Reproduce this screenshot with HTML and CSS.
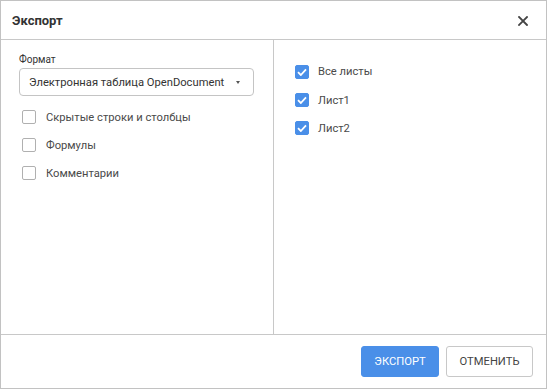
FILE: index.html
```html
<!DOCTYPE html>
<html lang="ru">
<head>
    <meta charset="UTF-8">
    <title>Экспорт</title>
    <link rel="stylesheet" href="styles.css">
</head>
<body>
<div class="dialog">
    <div class="dialog-header">
        <span class="dialog-title">Экспорт</span>
        <svg class="close" width="10" height="10" viewBox="0 0 10 10">
            <path d="M1 1L9 9M9 1L1 9" stroke="#444" stroke-width="1.8" stroke-linecap="square"/>
        </svg>
    </div>
    <div class="dialog-body">
        <div class="panel panel-left">
            <div class="field-label">Формат</div>
            <div class="select">
                <span>Электронная таблица OpenDocument</span>
                <span class="arrow"></span>
            </div>
            <label class="check-row"><span class="box"></span>Скрытые строки и столбцы</label>
            <label class="check-row"><span class="box"></span>Формулы</label>
            <label class="check-row"><span class="box"></span>Комментарии</label>
        </div>
        <div class="panel panel-right">
            <label class="check-row"><span class="box checked"><svg width="10" height="8" viewBox="0 0 10 8"><path d="M1 4.2L3.8 7L9 1.4" fill="none" stroke="#fff" stroke-width="1.8"/></svg></span>Все листы</label>
            <label class="check-row"><span class="box checked"><svg width="10" height="8" viewBox="0 0 10 8"><path d="M1 4.2L3.8 7L9 1.4" fill="none" stroke="#fff" stroke-width="1.8"/></svg></span>Лист1</label>
            <label class="check-row"><span class="box checked"><svg width="10" height="8" viewBox="0 0 10 8"><path d="M1 4.2L3.8 7L9 1.4" fill="none" stroke="#fff" stroke-width="1.8"/></svg></span>Лист2</label>
        </div>
    </div>
    <div class="dialog-footer">
        <button class="btn btn-primary">Экспорт</button>
        <button class="btn">Отменить</button>
    </div>
</div>
</body>
</html>
```

FILE: styles.css
```css
* {
    margin: 0;
    padding: 0;
    box-sizing: border-box;
    font-family: Roboto, 'Liberation Sans', sans-serif;
}

body {
    background: #fff;
}

.dialog {
    width: 547px;
    height: 389px;
    border: 1px solid #c2c2c2;
    display: flex;
    flex-direction: column;
    color: #444;
}

.dialog-header {
    height: 39px;
    border-bottom: 1px solid #c8c8c8;
    display: flex;
    align-items: center;
    justify-content: space-between;
    padding: 0 18px 0 11px;
}

.dialog-title {
    font-size: 13px;
    font-weight: bold;
    color: #333;
}

.close {
    margin-top: 1px;
}

.dialog-body {
    height: 295px;
    border-bottom: 1px solid #c8c8c8;
    display: flex;
}

.panel {
    display: flex;
    flex-direction: column;
}

.panel-left {
    width: 273px;
    border-right: 1px solid #c8c8c8;
    padding: 14px 19px 0 18px;
}

.panel-right {
    flex: 1;
    padding: 17px 20px 0 18px;
}

.field-label {
    font-size: 10px;
    line-height: 12px;
    color: #333;
    margin-bottom: 2px;
}

.select {
    height: 28px;
    border: 1px solid #c4c4c4;
    border-radius: 4px;
    display: flex;
    align-items: center;
    justify-content: space-between;
    padding: 0 13px 0 9px;
    font-size: 11.2px;
    color: #333;
    white-space: nowrap;
    margin-bottom: 7px;
}

.arrow {
    width: 0;
    height: 0;
    margin-top: 1px;
    border-left: 2.5px solid transparent;
    border-right: 2.5px solid transparent;
    border-top: 3px solid #555;
}

.check-row {
    height: 28px;
    display: flex;
    align-items: center;
    font-size: 11.2px;
    color: #4a4a4a;
}

.panel-right .check-row:first-child {
    height: 29px;
}

.box {
    width: 14px;
    height: 14px;
    border: 1.5px solid #b0b0b0;
    border-radius: 2px;
    margin: 0 10px 0 3px;
    display: flex;
    align-items: center;
    justify-content: center;
}

.panel-right .box {
    margin-right: 9px;
}

.box.checked {
    background: #4a8fe8;
    border-color: #4a8fe8;
}

.dialog-footer {
    flex: 1;
    display: flex;
    justify-content: flex-end;
    align-items: flex-start;
    gap: 7px;
    padding: 11px 13px 0 0;
}

.btn {
    height: 31px;
    width: 87px;
    border: 1px solid #c8c8c8;
    border-radius: 3px;
    background: #fff;
    color: #444;
    font-size: 11.2px;
    text-transform: uppercase;
}

.btn-primary {
    width: 78px;
    background: #4a8fe8;
    border-color: #4a8fe8;
    color: #fff;
}
```
